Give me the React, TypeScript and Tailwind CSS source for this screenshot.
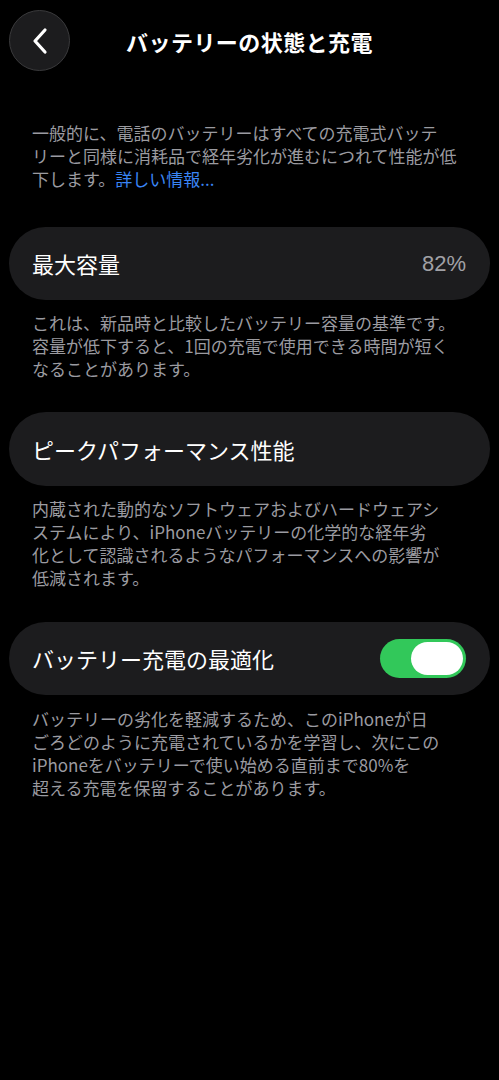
import React, { useState } from 'react';

const font = { fontFamily: '"Noto Sans CJK JP", "Noto Sans", sans-serif' };

const Note: React.FC<{ lines: React.ReactNode[]; className?: string }> = ({ lines, className }) => (
  <p className={`px-[32px] text-[17px] leading-[23px] text-[#9b9ba0] whitespace-nowrap ${className ?? ''}`}>
    {lines.map((l, i) => (
      <React.Fragment key={i}>
        {l}
        {i < lines.length - 1 && <br />}
      </React.Fragment>
    ))}
  </p>
);

const App: React.FC = () => {
  const [optimized, setOptimized] = useState(true);

  return (
    <div className="min-h-[1080px] w-[499px] bg-black text-white" style={font}>
      {/* Header */}
      <div className="relative flex h-[82px] items-center justify-center">
        <button className="absolute left-[9px] top-[10px] flex h-[61px] w-[61px] items-center justify-center rounded-full border border-[#3a3a3c] bg-[#1c1c1e]">
          <svg width="18" height="28" viewBox="0 0 18 28" fill="none">
            <path d="M14 3 L4 14 L14 25" stroke="white" strokeWidth="3.2" strokeLinecap="round" strokeLinejoin="round" />
          </svg>
        </button>
        <h1 className="text-[22px] font-semibold tracking-[0.02em]">バッテリーの状態と充電</h1>
      </div>

      <Note
        className="mt-[39px]"
        lines={[
          '一般的に、電話のバッテリーはすべての充電式バッテ',
          'リーと同様に消耗品で経年劣化が進むにつれて性能が低',
          <>
            下します。<span className="text-[#3a85f5]">詳しい情報...</span>
          </>,
        ]}
      />

      {/* Max capacity */}
      <div className="mx-[9px] mt-[37px] flex h-[73px] items-center justify-between rounded-full bg-[#1c1c1e] pl-[23px] pr-[24px]">
        <span className="text-[22px]">最大容量</span>
        <span className="text-[22px] text-[#a1a1a6]" style={{ fontFamily: '"Liberation Sans", "Noto Sans", sans-serif' }}>82%</span>
      </div>

      <Note
        className="mt-[11px]"
        lines={[
          'これは、新品時と比較したバッテリー容量の基準です。',
          '容量が低下すると、1回の充電で使用できる時間が短く',
          'なることがあります。',
        ]}
      />

      {/* Peak performance */}
      <div className="mx-[9px] mt-[32px] flex h-[74px] items-center rounded-full bg-[#1c1c1e] pl-[23px]">
        <span className="text-[22px]">ピークパフォーマンス性能</span>
      </div>

      <Note
        className="mt-[11px]"
        lines={[
          '内蔵された動的なソフトウェアおよびハードウェアシ',
          'ステムにより、iPhoneバッテリーの化学的な経年劣',
          '化として認識されるようなパフォーマンスへの影響が',
          '低減されます。',
        ]}
      />

      {/* Optimized charging */}
      <div className="mx-[9px] mt-[33px] flex h-[73px] items-center justify-between rounded-full bg-[#1c1c1e] pl-[23px] pr-[24px]">
        <span className="text-[22px]">バッテリー充電の最適化</span>
        <button
          onClick={() => setOptimized(!optimized)}
          className={`flex h-[39px] w-[86px] items-center rounded-full px-[3px] ${optimized ? 'justify-end bg-[#32c85a]' : 'justify-start bg-[#39393d]'}`}
        >
          <span className="h-[33px] w-[52px] rounded-full bg-white" />
        </button>
      </div>

      <Note
        className="mt-[12px]"
        lines={[
          'バッテリーの劣化を軽減するため、このiPhoneが日',
          'ごろどのように充電されているかを学習し、次にこの',
          'iPhoneをバッテリーで使い始める直前まで80%を',
          '超える充電を保留することがあります。',
        ]}
      />
    </div>
  );
};

export default App;
